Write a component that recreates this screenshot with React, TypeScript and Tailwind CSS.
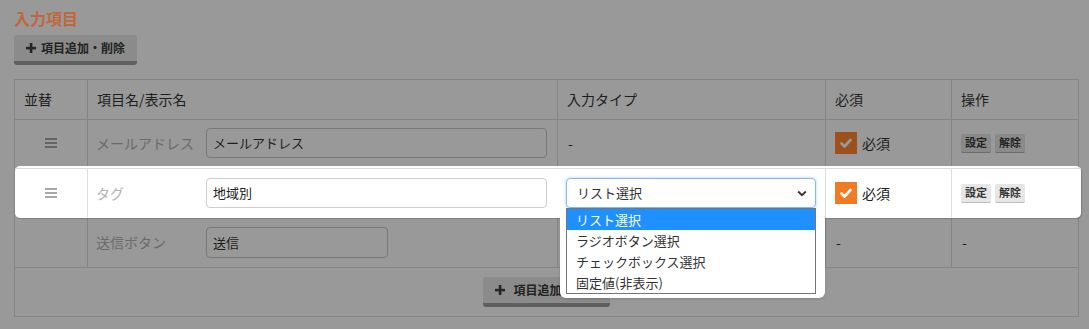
import React from "react";

const font = "font-['Noto_Sans_CJK_JP','Liberation_Sans',sans-serif]";
const cols = "grid grid-cols-[72px_470px_268px_126px_127px]";

const Bars = ({ light }: { light?: boolean }) => (
  <div className="flex w-3 flex-col gap-[2px]">
    {[0, 1, 2].map((i) => (
      <span key={i} className={light ? "block h-[2px] bg-[#a8a8a8]" : "block h-[2px] bg-[#656565]"} />
    ))}
  </div>
);

const Plus = () => (
  <svg width="10" height="10" viewBox="0 0 10 10" className="shrink-0">
    <rect x="3.8" y="0" width="2.6" height="10" fill="#262626" />
    <rect x="0" y="3.8" width="10" height="2.6" fill="#262626" />
  </svg>
);

const AddButton = ({ wide }: { wide?: boolean }) => (
  <div
    className={
      wide
        ? "flex h-[30px] w-[127px] items-center justify-center gap-[8px] rounded-[3px] border-b-[4px] border-[#5f5f5f] bg-[#8b8b8b] text-[12px] font-bold leading-none text-[#222]"
        : "flex h-[30px] w-[123px] items-center justify-center gap-[5px] rounded-[3px] border-b-[4px] border-[#5f5f5f] bg-[#8b8b8b] text-[12px] font-bold leading-none text-[#222]"
    }
  >
    <Plus />
    <span>項目追加・削除</span>
  </div>
);

const Check = ({ dim }: { dim?: boolean }) => (
  <div
    className={
      dim
        ? "flex h-[22px] w-[22px] items-center justify-center bg-[#9e501c]"
        : "flex h-[22px] w-[22px] items-center justify-center bg-[#f17b22]"
    }
  >
    <svg width="14" height="14" viewBox="0 0 14 14">
      <path
        d="M2.5 7.5l3 3 6-6.5"
        fill="none"
        stroke={dim ? "#9a9a9a" : "#ffffff"}
        strokeWidth="2.6"
        strokeLinecap="round"
        strokeLinejoin="round"
      />
    </svg>
  </div>
);

const SmallBtn = ({ children, dim }: { children: React.ReactNode; dim?: boolean }) => (
  <span
    className={
      dim
        ? "flex h-[19px] w-[30px] items-center justify-center rounded-[2px] border-b border-[#6c6c6c] bg-[#8a8a8a] text-[11px] font-bold leading-none text-[#222]"
        : "flex h-[19px] w-[30px] items-center justify-center rounded-[2px] border-b border-[#bdbdbd] bg-[#e6e6e6] text-[11px] font-bold leading-none text-[#333]"
    }
  >
    {children}
  </span>
);

const options = ["リスト選択", "ラジオボタン選択", "チェックボックス選択", "固定値(非表示)"];

export default function App() {
  return (
    <div className={`${font} h-[329px] w-[1089px] overflow-hidden bg-[#999999] pl-[14px] pt-[8px]`}>
      <h2 className="text-[16px] font-bold leading-[20px] text-[#c0673e]">入力項目</h2>
      <div className="mt-[7px] flex">
        <AddButton />
      </div>

      <div className="mt-[14px] w-[1065px] border border-[#858585] text-[14px] text-[#1e1e1e]">
        {/* header */}
        <div className={`${cols} h-[40px] border-b border-[#858585]`}>
          <div className="flex items-center pl-[9px]">並替</div>
          <div className="flex items-center border-l border-[#858585] pl-[9px]">項目名/表示名</div>
          <div className="flex items-center border-l border-[#858585] pl-[9px]">入力タイプ</div>
          <div className="flex items-center border-l border-[#858585] pl-[9px]">必須</div>
          <div className="flex items-center border-l border-[#858585] pl-[9px]">操作</div>
        </div>

        {/* row 1 */}
        <div className={`${cols} h-[46px]`}>
          <div className="flex items-center justify-center">
            <Bars />
          </div>
          <div className="flex items-center border-l border-[#858585] pl-[8px]">
            <span className="w-[110px] text-[#6b6b6b]">メールアドレス</span>
            <div className="flex h-[30px] w-[341px] items-center rounded-[4px] border border-[#787878] pl-[6px] text-[13px]">
              メールアドレス
            </div>
          </div>
          <div className="flex items-center border-l border-[#858585] pl-[10px]">-</div>
          <div className="flex items-center gap-[5px] border-l border-[#858585] pl-[9px]">
            <Check dim />
            <span>必須</span>
          </div>
          <div className="flex items-center gap-[4px] border-l border-[#858585] pl-[9px]">
            <SmallBtn dim>設定</SmallBtn>
            <SmallBtn dim>解除</SmallBtn>
          </div>
        </div>

        {/* row 2, focused */}
        <div className="relative z-10 -mr-[3px] h-[52px] rounded-[5px] bg-white pt-[2px] shadow-[1px_1px_1px_rgba(0,0,0,0.18)]">
          <div className="grid h-[49px] grid-cols-[72px_470px_268px_126px_130px] border-t border-[#dedede]">
            <div className="flex items-center justify-center">
              <Bars light />
            </div>
            <div className="flex items-center border-l border-[#dedede] pl-[8px]">
              <span className="w-[110px] text-[#b3b3b3]">タグ</span>
              <div className="flex h-[30px] w-[341px] items-center rounded-[4px] border border-[#cccccc] pl-[6px] text-[13px] text-[#222]">
                地域別
              </div>
            </div>
            <div className="relative flex items-center pl-[9px]">
              <div className="absolute left-[3px] right-0 top-full h-[81px] rounded-b-[6px] bg-white shadow-[0_1px_3px_rgba(0,0,0,0.15)]" />
              <div className="relative">
                <div className="flex h-[30px] w-[250px] items-center justify-between rounded-[4px] border border-[#86b6f2] pl-[10px] pr-[8px] text-[13px] text-[#333] shadow-[0_0_3px_rgba(90,150,240,0.5)]">
                  <span>リスト選択</span>
                  <svg width="10" height="7" viewBox="0 0 10 7">
                    <path d="M1.2 1.5L5 5.2l3.8-3.7" fill="none" stroke="#333" strokeWidth="1.8" />
                  </svg>
                </div>
                <ul className="absolute left-0 top-full z-20 w-[250px] border border-[#767676] bg-white text-[13px] leading-[21px] text-[#333]">
                  {options.map((o, i) => (
                    <li key={o} className={i === 0 ? "bg-[#1e90ff] pl-[9px] text-white" : "pl-[9px]"}>
                      {o}
                    </li>
                  ))}
                </ul>
              </div>
            </div>
            <div className="flex items-center gap-[5px] border-l border-[#dedede] pl-[9px] text-[#222]">
              <Check />
              <span>必須</span>
            </div>
            <div className="flex items-center gap-[4px] border-l border-[#dedede] pl-[9px]">
              <SmallBtn>設定</SmallBtn>
              <SmallBtn>解除</SmallBtn>
            </div>
          </div>
        </div>

        {/* row 3 */}
        <div className={`${cols} h-[50px] border-b border-[#858585]`}>
          <div />
          <div className="flex items-center border-l border-[#858585] pl-[8px]">
            <span className="w-[110px] text-[#6b6b6b]">送信ボタン</span>
            <div className="flex h-[31px] w-[182px] items-center rounded-[4px] border border-[#787878] pl-[6px] text-[13px]">
              送信
            </div>
          </div>
          <div className="border-l border-[#858585]" />
          <div className="flex items-center border-l border-[#858585] pl-[10px]">-</div>
          <div className="flex items-center border-l border-[#858585] pl-[10px]">-</div>
        </div>

        {/* footer */}
        <div className="flex h-[48px] items-center justify-center">
          <AddButton wide />
        </div>
      </div>
    </div>
  );
}
